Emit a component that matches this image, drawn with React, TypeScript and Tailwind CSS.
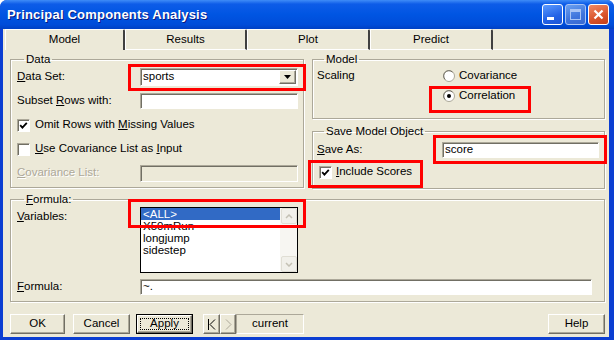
import React from "react";

const raised =
  "border border-t-white border-l-white border-b-[#716f64] border-r-[#716f64] shadow-[inset_-1px_-1px_0_#aca899]";
const sunken =
  "border border-t-[#aca899] border-l-[#aca899] border-b-white border-r-white shadow-[inset_1px_1px_0_#716f64]";
const group =
  "border border-[#aca899] shadow-[1px_1px_0_#fff,inset_1px_1px_0_#fff]";

const Check = ({ checked }: { checked?: boolean }) => (
  <div className={`w-[13px] h-[13px] bg-white flex items-center justify-center ${sunken}`}>
    {checked && (
      <svg width="9" height="9" viewBox="0 0 9 9">
        <path d="M1.2 4.2 L3.4 6.6 L7.8 1.8" stroke="#000" strokeWidth="1.8" fill="none" />
      </svg>
    )}
  </div>
);

const Radio = ({ on }: { on?: boolean }) => (
  <svg width="12" height="12" viewBox="0 0 12 12">
    <circle cx="6" cy="6" r="5.5" fill="#fff" stroke="#aca899" />
    <path d="M2.2 9.5 A4.7 4.7 0 0 1 9.5 2.2" stroke="#716f64" fill="none" />
    {on && <circle cx="6" cy="6" r="2" fill="#000" />}
  </svg>
);

const Chevron = ({ up }: { up?: boolean }) => (
  <div className="w-[16px] h-[16px] bg-[#f1f0ea] border border-[#e0ded4] rounded-[2px] flex items-center justify-center">
    <svg width="8" height="5" viewBox="0 0 8 5">
      <path d={up ? "M1 4 L4 1 L7 4" : "M1 1 L4 4 L7 1"} stroke="#c4c1b4" strokeWidth="1.5" fill="none" />
    </svg>
  </div>
);

const Btn = ({ children, w, focus }: { children: React.ReactNode; w: string; focus?: boolean }) => (
  <div className={`${w} h-[20px] ${focus ? "border border-black" : ""}`}>
    <div className={`w-full h-full bg-[#ece9d8] flex items-center justify-center ${focus ? "p-[2px]" : ""} ${raised}`}>
      {focus ? (
        <div className="w-full h-full flex items-center justify-center border border-dotted border-black">
          {children}
        </div>
      ) : (
        children
      )}
    </div>
  </div>
);

const Tab = ({ label, w, active }: { label: string; w: string; active?: boolean }) => (
  <div
    className={`${w} h-[21px] flex items-center justify-center border-t border-l border-white border-r-2 border-r-[#404040] rounded-tr-[2px] ${
      active ? "" : "border-b border-b-white"
    }`}
  >
    {label}
  </div>
);

const RedBox = ({ c }: { c: string }) => (
  <div className={`absolute border-[3px] border-[#ff0000] pointer-events-none ${c}`} />
);

export default function App() {
  return (
    <div className="relative w-[614px] h-[340px] overflow-hidden bg-[#0b3ed2] rounded-t-[7px] flex flex-col font-['Liberation_Sans',Arial,sans-serif] text-[11.5px] text-black">
      {/* title bar */}
      <div className="h-[29px] shrink-0 flex items-center bg-[linear-gradient(180deg,#3f8cf7_0%,#0d5ce8_14%,#0055e2_50%,#004cd9_85%,#0040c4_100%)]">
        <span className="pl-[7px] text-white font-bold text-[13px] tracking-[0.2px] [text-shadow:1px_1px_0_#0a1a80]">
          Principal Components Analysis
        </span>
        <div className="ml-auto mr-[5px] flex gap-[2px]">
          <div className="w-[21px] h-[21px] rounded-[3px] border border-white bg-[linear-gradient(160deg,#5b9bff,#2463e6_60%,#1d55d6)] flex items-end pl-[4px] pb-[4px]">
            <div className="w-[7px] h-[3px] bg-white" />
          </div>
          <div className="w-[21px] h-[21px] rounded-[3px] border border-[#a9c4f5] bg-[linear-gradient(160deg,#6aa0f0,#3f74dc_60%,#3869d2)] flex items-center justify-center">
            <div className="w-[11px] h-[11px] border border-[#a9c4f5] border-t-[3px]" />
          </div>
          <div className="w-[21px] h-[21px] rounded-[3px] border border-white bg-[linear-gradient(160deg,#f08a66,#d9542b_60%,#c4401a)] flex items-center justify-center">
            <svg width="11" height="11" viewBox="0 0 11 11">
              <path d="M1.5 1.5 L9.5 9.5 M9.5 1.5 L1.5 9.5" stroke="#fff" strokeWidth="2.2" />
            </svg>
          </div>
        </div>
      </div>

      {/* body */}
      <div className="flex-1 ml-[3px] mr-[5px] mb-[3px] bg-[#ece9d8] flex flex-col">
        <div className="h-[21px] flex pl-[2px]">
          <Tab label="Model" w="w-[120px]" active />
          <Tab label="Results" w="w-[122px]" />
          <Tab label="Plot" w="w-[123px]" />
          <Tab label="Predict" w="w-[123px]" />
          <div className="flex-1 border-b border-white" />
        </div>

        <div className="pl-[7px] pt-[2px] flex flex-col">
          <div className="flex gap-[8px]">
            {/* Data */}
            <fieldset className={`w-[294px] h-[136px] pl-[6px] ${group}`}>
              <legend className="ml-[7px] px-[2px] leading-[14px]">Data</legend>
              <div className="pt-[1px] flex flex-col gap-[4px]">
                <div className="h-[20px] flex items-center">
                  <span className="w-[123px]"><u>D</u>ata Set:</span>
                  <div className={`w-[158px] h-[18px] bg-white flex items-center ${sunken}`}>
                    <span className="pl-[2px] flex-1">sports</span>
                    <div className={`w-[17px] h-[14px] mr-[1px] bg-[#ece9d8] flex items-center justify-center ${raised}`}>
                      <svg width="7" height="4" viewBox="0 0 7 4">
                        <path d="M0 0 H7 L3.5 4 Z" fill="#000" />
                      </svg>
                    </div>
                  </div>
                </div>
                <div className="h-[20px] flex items-center">
                  <span className="w-[123px]">Subset <u>R</u>ows with:</span>
                  <div className={`w-[158px] h-[16px] bg-white ${sunken}`} />
                </div>
                <div className="h-[20px] flex items-center gap-[5px]">
                  <Check checked />
                  <span>Omit Rows with <u>M</u>issing Values</span>
                </div>
                <div className="h-[20px] flex items-center gap-[5px]">
                  <Check />
                  <span><u>U</u>se Covariance List as <u>I</u>nput</span>
                </div>
                <div className="h-[20px] flex items-center">
                  <span className="w-[123px] text-[#aca899] [text-shadow:1px_1px_0_#fff]"><u>C</u>ovariance List:</span>
                  <div className={`w-[158px] h-[17px] bg-[#ece9d8] ${sunken}`} />
                </div>
              </div>
            </fieldset>

            <div className="flex flex-col gap-[5px]">
              {/* Model */}
              <fieldset className={`w-[293px] h-[67px] pl-[4px] ${group}`}>
                <legend className="ml-[7px] px-[2px] leading-[14px]">Model</legend>
                <div className="h-[20px] flex items-center">
                  <span className="w-[126px]">Scaling</span>
                  <Radio />
                  <span className="ml-[4px]">Covariance</span>
                </div>
                <div className="h-[20px] flex items-center pl-[126px]">
                  <Radio on />
                  <span className="ml-[4px]">Correlation</span>
                </div>
              </fieldset>

              {/* Save */}
              <fieldset className={`w-[293px] h-[65px] pl-[4px] ${group}`}>
                <legend className="ml-[7px] px-[2px] leading-[14px]">Save Model Object</legend>
                <div className="pt-[2px] flex flex-col gap-[2px]">
                  <div className="h-[20px] flex items-center">
                    <span className="w-[125px]"><u>S</u>ave As:</span>
                    <div className={`w-[157px] h-[16px] bg-white flex items-center pl-[2px] ${sunken}`}>score</div>
                  </div>
                  <div className="h-[20px] flex items-center gap-[4px] pl-[2px]">
                    <Check checked />
                    <span><u>I</u>nclude Scores</span>
                  </div>
                </div>
              </fieldset>
            </div>
          </div>

          {/* Formula */}
          <fieldset className={`mt-[3px] w-[595px] h-[110px] pl-[6px] ${group}`}>
            <legend className="ml-[7px] px-[2px] leading-[14px]"><u>F</u>ormula:</legend>
            <div className="pt-[1px] flex">
              <span className="w-[123px] mt-[2px] leading-[14px]"><u>V</u>ariables:</span>
              <div className="w-[158px] h-[66px] bg-white border border-black flex">
                <div className="flex-1 flex flex-col leading-[12px]">
                  <div className="h-[12px] bg-[#316ac5] text-white pl-[2px]">&lt;ALL&gt;</div>
                  <div className="h-[12px] pl-[2px]">X50mRun</div>
                  <div className="h-[12px] pl-[2px]">longjump</div>
                  <div className="h-[12px] pl-[2px]">sidestep</div>
                </div>
                <div className="w-[17px] bg-[#f7f6f2] flex flex-col justify-between items-center">
                  <Chevron up />
                  <Chevron />
                </div>
              </div>
            </div>
            <div className="mt-[6px] h-[16px] flex items-center">
              <span className="w-[123px]"><u>F</u>ormula:</span>
              <div className={`w-[452px] h-[16px] bg-white flex items-center pl-[2px] ${sunken}`}>~.</div>
            </div>
          </fieldset>
        </div>

        {/* bottom bar */}
        <div className="flex-1 flex items-start pt-[12px] pl-[7px] pr-[4px]">
          <Btn w="w-[55px]">OK</Btn>
          <div className="ml-[8px]"><Btn w="w-[57px]">Cancel</Btn></div>
          <div className="ml-[6px]"><Btn w="w-[57px]" focus>Apply</Btn></div>
          <div className="ml-[10px] flex">
            <div className={`w-[17px] h-[20px] bg-[#ece9d8] flex items-center justify-center ${raised}`}>
              <svg width="9" height="11" viewBox="0 0 9 11">
                <path d="M1.5 0 V11 M8 0.5 L3 5.5 L8 10.5" stroke="#000" strokeWidth="1" fill="none" />
              </svg>
            </div>
            <div className={`w-[16px] h-[20px] bg-[#ece9d8] flex items-center justify-center ${raised}`}>
              <svg width="7" height="11" viewBox="0 0 7 11">
                <path d="M1 0.5 L6 5.5 L1 10.5" stroke="#aca899" strokeWidth="1" fill="none" />
              </svg>
            </div>
            <div className="w-[68px] h-[20px] flex items-center justify-center border border-t-[#aca899] border-l-[#aca899] border-b-white border-r-white">
              current
            </div>
          </div>
          <div className="ml-auto"><Btn w="w-[57px]">Help</Btn></div>
        </div>
      </div>

      {/* annotations */}
      <RedBox c="left-[128px] top-[64px] w-[178px] h-[27px]" />
      <RedBox c="left-[429px] top-[86px] w-[102px] h-[27px]" />
      <RedBox c="left-[433px] top-[135px] w-[174px] h-[29px]" />
      <RedBox c="left-[308px] top-[160px] w-[115px] h-[28px]" />
      <RedBox c="left-[128px] top-[199px] w-[178px] h-[29px]" />
    </div>
  );
}
